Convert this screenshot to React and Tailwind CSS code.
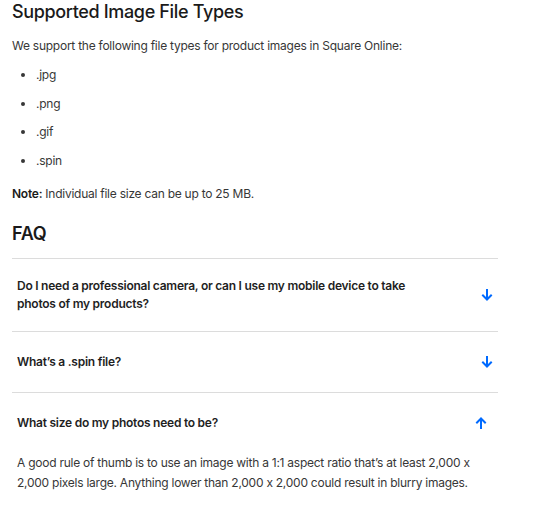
import React from 'react';

function ArrowIcon({ up }) {
    return (
        <svg width="12" height="12" viewBox="0 0 12 12" fill="none" className={up ? 'rotate-180' : ''}>
            <path d="M6 1v9M2 6.5L6 10.5L10 6.5" stroke="#006aff" strokeWidth="2" strokeLinecap="square" />
        </svg>
    );
}

const faqs = [
    { q: 'Do I need a professional camera, or can I use my mobile device to take photos of my products?', open: false },
    { q: 'What’s a .spin file?', open: false },
    { q: 'What size do my photos need to be?', open: true },
];

export default function App() {
    return (
        <div className="min-h-screen bg-white font-['Inter',sans-serif] text-[#373737] [font-feature-settings:'calt'_0] tracking-[-0.25px]">
            <div className="w-[486px] ml-3">
                <h1 className="text-[18px] leading-6 font-medium text-[#1a1a1a] tracking-[-0.35px]">Supported Image File Types</h1>
                <p className="mt-[13px] text-[12px] leading-[18px]">
                    We support the following file types for product images in Square Online:
                </p>
                <ul className="mt-[11px] pl-6 list-disc text-[12px] leading-[18px] space-y-[10.5px]">
                    <li>.jpg</li>
                    <li>.png</li>
                    <li>.gif</li>
                    <li>.spin</li>
                </ul>
                <p className="mt-[15px] text-[12px] leading-[18px]">
                    <span className="font-semibold text-[#1a1a1a]">Note:</span> Individual file size can be up to 25 MB.
                </p>
                <h2 className="mt-[19px] text-[18px] leading-6 font-semibold text-[#1a1a1a]">FAQ</h2>

                <div className="mt-3">
                    {faqs.map((f, i) => (
                        <div key={i} className="border-t border-[#dcdcdc] pl-[5px]">
                            <div className="flex items-center justify-between py-[18px]">
                                <span className="max-w-[425px] text-[12px] leading-[18px] font-semibold text-[#1f1f1f]">{f.q}</span>
                                <span className={`flex items-center justify-center h-6 w-[22px] shrink-0 ${f.open ? 'mr-[6px]' : ''}`}>
                                    <ArrowIcon up={f.open} />
                                </span>
                            </div>
                            {f.open && (
                                <p className="text-[12px] leading-5 pr-2">
                                    A good rule of thumb is to use an image with a 1:1 aspect ratio that’s at least 2,000 x 2,000 pixels large. Anything lower than 2,000 x 2,000 could result in blurry images.
                                </p>
                            )}
                        </div>
                    ))}
                </div>
            </div>
        </div>
    );
}
